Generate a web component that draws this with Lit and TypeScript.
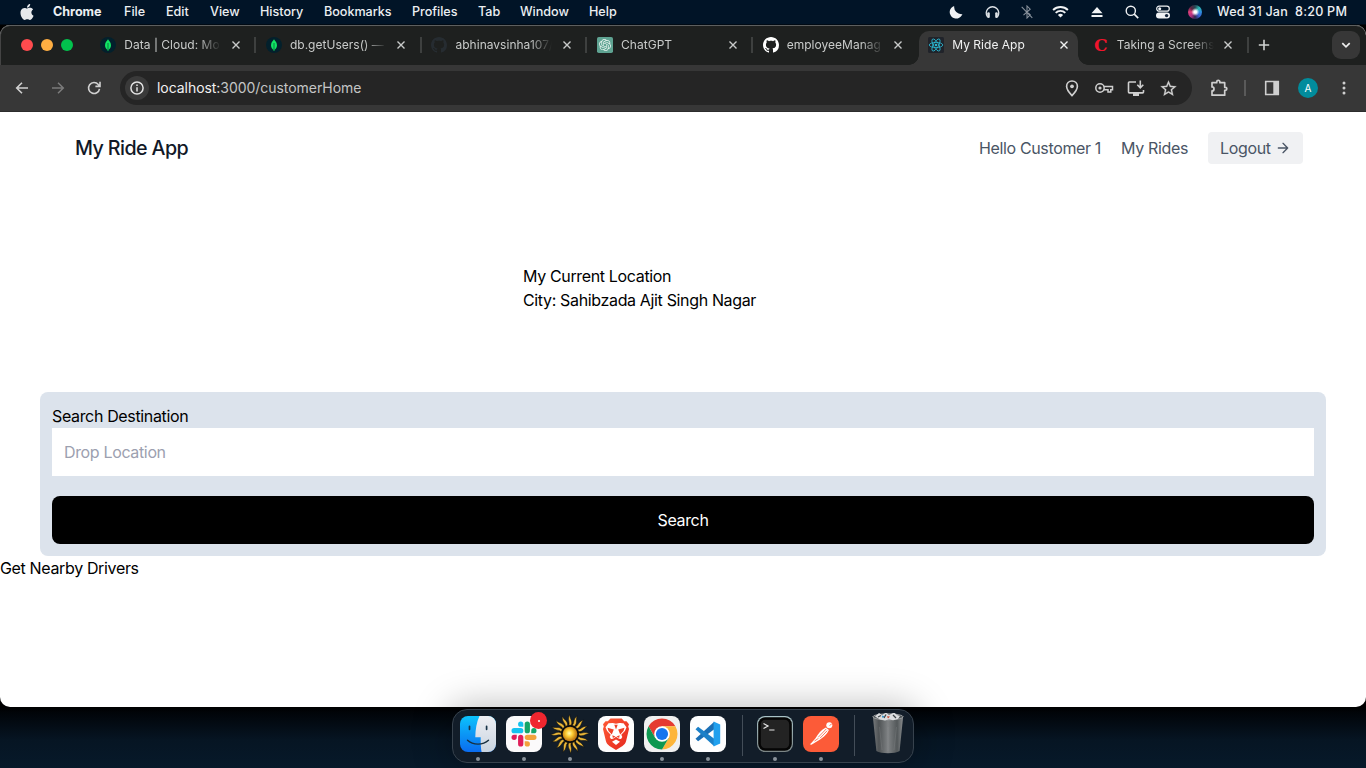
import { LitElement, html, css, svg } from "lit";
import { customElement } from "lit/decorators.js";

const ic = (size: number, viewBox: string, body: unknown) =>
  html`<svg class="ic" width=${size} height=${size} viewBox=${viewBox}>${body}</svg>`;

const APPLE =
  "M12.152 6.896c-.948 0-2.415-1.078-3.96-1.04-2.04.027-3.91 1.183-4.961 3.014-2.117 3.675-.546 9.103 1.519 12.09 1.013 1.454 2.208 3.09 3.792 3.039 1.52-.065 2.09-.987 3.935-.987 1.831 0 2.35.987 3.96.948 1.637-.026 2.676-1.48 3.676-2.948 1.156-1.688 1.636-3.325 1.662-3.415-.039-.013-3.182-1.221-3.22-4.857-.026-3.04 2.48-4.494 2.597-4.559-1.429-2.09-3.623-2.324-4.39-2.376-2-.156-3.675 1.09-4.61 1.09zM15.53 3.83c.843-1.012 1.4-2.427 1.245-3.83-1.207.052-2.662.805-3.532 1.818-.78.896-1.454 2.338-1.273 3.714 1.338.104 2.715-.688 3.559-1.701";
const GITHUB =
  "M8 0C3.58 0 0 3.58 0 8c0 3.54 2.29 6.53 5.47 7.59.4.07.55-.17.55-.38 0-.19-.01-.82-.01-1.49-2.01.37-2.53-.49-2.69-.94-.09-.23-.48-.94-.82-1.13-.28-.15-.68-.52-.01-.53.63-.01 1.08.58 1.23.82.72 1.21 1.87.87 2.33.66.07-.52.28-.87.51-1.07-1.78-.2-3.64-.89-3.64-3.95 0-.87.31-1.59.82-2.15-.08-.2-.36-1.02.08-2.12 0 0 .67-.21 2.2.82.64-.18 1.32-.27 2-.27s1.36.09 2 .27c1.53-1.04 2.2-.82 2.2-.82.44 1.1.16 1.92.08 2.12.51.56.82 1.27.82 2.15 0 3.07-1.87 3.75-3.65 3.95.29.25.54.73.54 1.48 0 1.07-.01 1.93-.01 2.2 0 .21.15.46.55.38A8.01 8.01 0 0 0 16 8c0-4.42-3.58-8-8-8z";
const OPENAI =
  "M22.2819 9.8211a5.9847 5.9847 0 0 0-.5157-4.9108 6.0462 6.0462 0 0 0-6.5098-2.9A6.0651 6.0651 0 0 0 4.9807 4.1818a5.9847 5.9847 0 0 0-3.9977 2.9 6.0462 6.0462 0 0 0 .7427 7.0966 5.98 5.98 0 0 0 .511 4.9107 6.051 6.051 0 0 0 6.5146 2.9001A5.9847 5.9847 0 0 0 13.2599 24a6.0557 6.0557 0 0 0 5.7718-4.2058 5.9894 5.9894 0 0 0 3.9977-2.9001 6.0557 6.0557 0 0 0-.7475-7.0729zm-9.022 12.6081a4.4755 4.4755 0 0 1-2.8764-1.0408l.1419-.0804 4.7783-2.7582a.7948.7948 0 0 0 .3927-.6813v-6.7369l2.02 1.1686a.071.071 0 0 1 .038.052v5.5826a4.504 4.504 0 0 1-4.4945 4.4944zm-9.6607-4.1254a4.4708 4.4708 0 0 1-.5346-3.0137l.142.0852 4.783 2.7582a.7712.7712 0 0 0 .7806 0l5.8428-3.3685v2.3324a.0804.0804 0 0 1-.0332.0615L9.74 19.9502a4.4992 4.4992 0 0 1-6.1408-1.6464zM2.3408 7.8956a4.485 4.485 0 0 1 2.3655-1.9728V11.6a.7664.7664 0 0 0 .3879.6765l5.8144 3.3543-2.0201 1.1685a.0757.0757 0 0 1-.071 0l-4.8303-2.7865A4.504 4.504 0 0 1 2.3408 7.872zm16.5963 3.8558L13.1038 8.364 15.1192 7.2a.0757.0757 0 0 1 .071 0l4.8303 2.7913a4.4944 4.4944 0 0 1-.6765 8.1042v-5.6772a.79.79 0 0 0-.407-.667zm2.0107-3.0231l-.142-.0852-4.7735-2.7818a.7759.7759 0 0 0-.7854 0L9.409 9.2297V6.8974a.0662.0662 0 0 1 .0284-.0615l4.8303-2.7866a4.4992 4.4992 0 0 1 6.6802 4.66zM8.3065 12.863l-2.02-1.1638a.0804.0804 0 0 1-.038-.0567V6.0742a4.4992 4.4992 0 0 1 7.3757-3.4537l-.142.0805L8.704 5.459a.7948.7948 0 0 0-.3927.6813zm1.0976-2.3654l2.602-1.4998 2.6069 1.4998v2.9994l-2.5974 1.4997-2.6067-1.4997Z";

const mongo = ic(16, "0 0 16 16", svg`<circle cx="8" cy="8" r="8" fill="#03202c"/><path d="M8 2.300c.5 1 3 2.900 3 5.900 0 2.600-1.500 4-2.600 4.800L8.200 14h-.4l-.2-1C6.500 12.200 5 10.800 5 8.200c0-3 2.500-4.900 3-5.900z" fill="#10e464"/><path d="M7.500 6h1v8h-1z" fill="#087a43"/>`);
const githubDark = ic(16, "0 0 16 16", svg`<path d=${GITHUB} fill="#262c31"/>`);
const githubLight = ic(16, "0 0 16 16", svg`<path d=${GITHUB} fill="#fff"/>`);
const chatgpt = ic(16, "0 0 16 16", svg`<rect width="16" height="16" rx="1.800" fill="#5fa392"/><path transform="translate(2 2) scale(.5)" d=${OPENAI} fill="#e9f5f1"/>`);
const reactIcon = ic(16, "0 0 16 16", svg`<rect width="16" height="16" rx="1.500" fill="#20232a"/><g fill="none" stroke="#2bb5cf" stroke-width=".85"><ellipse cx="8" cy="8" rx="6.800" ry="2.600"/><ellipse cx="8" cy="8" rx="6.800" ry="2.600" transform="rotate(60 8 8)"/><ellipse cx="8" cy="8" rx="6.800" ry="2.600" transform="rotate(120 8 8)"/></g><circle cx="8" cy="8" r="1.300" fill="#2bb5cf"/>`);
const letterC = html`<span class="letter-c">C</span>`;

const closeX = ic(10, "0 0 10 10", svg`<path d="M1.500 1.500l7 7M8.500 1.500l-7 7" stroke="currentColor" stroke-width="1.400" fill="none"/>`);

const TABS = [
  { icon: mongo, title: "Data | Cloud: Mo" },
  { icon: mongo, title: "db.getUsers() —" },
  { icon: githubDark, title: "abhinavsinha107/" },
  { icon: chatgpt, title: "ChatGPT" },
  { icon: githubLight, title: "employeeManag" },
  { icon: reactIcon, title: "My Ride App", active: true },
  { icon: letterC, title: "Taking a Screens" },
];

const MENUS = ["Chrome", "File", "Edit", "View", "History", "Bookmarks", "Profiles", "Tab", "Window", "Help"];

const STATUS = [
  ic(14, "0 0 14 14", svg`<path d="M5.200 .9A6.500 6.500 0 1 0 13.400 9.100 7.300 7.300 0 0 1 5.200 .9z" fill="#f0f2f4"/>`),
  ic(15, "0 0 15 15", svg`<path d="M2.600 13A6.300 6.300 0 1 1 12.400 13" fill="none" stroke="#dfe3e7" stroke-width="1.300"/><rect x="2.200" y="8.300" width="2.600" height="5.700" rx="1.200" fill="#dfe3e7"/><rect x="10.200" y="8.300" width="2.600" height="5.700" rx="1.200" fill="#dfe3e7"/>`),
  ic(14, "0 0 14 14", svg`<path d="M3.500 10.200l6.700-6L7 1v12l3.200-3.200-2-1.800M1.700 1.800l10.600 11" fill="none" stroke="#8b949e" stroke-width="1.050"/>`),
  ic(17, "0 0 17 17", svg`<g fill="none" stroke="#f0f2f4" stroke-width="1.900"><path d="M1.100 7A10.500 10.500 0 0 1 15.900 7"/><path d="M3.700 9.900a6.800 6.800 0 0 1 9.600 0"/></g><path d="M8.500 14.600L5.900 12a3.700 3.700 0 0 1 5.200 0z" fill="#f0f2f4"/>`),
  ic(12, "0 0 12 12", svg`<path d="M6 1l5.500 6.300H.5zM.5 9h11v2H.5z" fill="#f0f2f4"/>`),
  ic(14, "0 0 14 14", svg`<circle cx="5.800" cy="5.800" r="4.600" fill="none" stroke="#f0f2f4" stroke-width="1.400"/><path d="M9.200 9.200l4 4" stroke="#f0f2f4" stroke-width="1.700"/>`),
  ic(14, "0 0 14 14", svg`<rect x=".7" y="1.200" width="12.600" height="5" rx="2.500" fill="none" stroke="#f0f2f4" stroke-width="1.200"/><circle cx="3.700" cy="3.700" r="1.500" fill="#f0f2f4"/><rect y="7.600" width="14" height="6" rx="3" fill="#f0f2f4"/><circle cx="10.600" cy="10.600" r="1.700" fill="#12243a"/>`),
  html`<span class="siri"></span>`,
];

const OMNI = [
  ic(18, "0 0 24 24", svg`<path d="M12 2.600c-4.200 0-7.200 3.100-7.200 7.200 0 3.700 2.500 7.700 7.200 12.400 4.700-4.700 7.200-8.700 7.200-12.400 0-4.100-3-7.200-7.200-7.200z" fill="none" stroke="currentColor" stroke-width="2.200"/><circle cx="12" cy="9.800" r="2.500" fill="currentColor"/>`),
  ic(20, "0 0 20 20", svg`<g fill="none" stroke="currentColor" stroke-width="1.500"><circle cx="6" cy="10" r="4.200"/><path d="M9.800 8.500H18.500v3.300H16.800v2.200H14v-2.200H9.800"/></g><circle cx="6" cy="10" r="1.600" fill="currentColor"/>`),
  ic(18, "0 0 18 18", svg`<g transform="translate(0 .6)"><g fill="none" stroke="currentColor" stroke-width="1.600"><path d="M9 2.400H2.300a.8.8 0 0 0-.8.8v9.300c0 .5.400.8.800.8h13.400a.8.8 0 0 0 .8-.8V10.500"/><path d="M13.300 1v7M10.300 5.200l3 3 3-3"/></g><path d="M6 13.500h6v2.800H6z" fill="currentColor"/></g>`),
  ic(19, "0 0 24 24", svg`<path d="M22 9.240l-7.190-.62L12 2 9.190 8.630 2 9.240l5.460 4.730L5.820 21 12 17.270 18.180 21l-1.630-7.030L22 9.240zM12 15.400l-3.760 2.270 1-4.280-3.320-2.880 4.380-.38L12 6.100l1.710 4.040 4.380.38-3.320 2.880 1 4.280L12 15.400z" fill="currentColor" stroke="currentColor" stroke-width=".3"/>`),
];

const sunRays = Array.from({ length: 16 }, (_, i) =>
  svg`<path d="M18.500 11.200C20.600 8.400 16.600 5.800 19.800 .4C19.400 4.600 23.200 6.400 21.200 11.200z" transform=${`rotate(${i * 22.5} 20 20)`} fill="#e9b638" stroke="#0c0d0d" stroke-width=".5"/>`);

const finder = svg`<defs><linearGradient id="fb" x1="0" y1="0" x2="0" y2="1"><stop offset="0" stop-color="#0cc2fb"/><stop offset="1" stop-color="#0a6cf0"/></linearGradient><linearGradient id="fw" x1="0" y1="0" x2="0" y2="1"><stop offset="0" stop-color="#eeeff3"/><stop offset="1" stop-color="#c9d4e0"/></linearGradient></defs>
<rect width="36" height="36" rx="8" fill="url(#fb)"/><path d="M19.500 0H28a8 8 0 0 1 8 8v20a8 8 0 0 1-8 8h-6.400c-.7-3.600-1-8-.9-14.800H15.300C15.400 13.500 16.600 5.800 19.500 0z" fill="url(#fw)"/><path d="M9.500 10.300v3M26.600 10.300v3" stroke="#183448" stroke-width="1.700" stroke-linecap="round"/><path d="M7.500 24.200c5.500 5.200 15.500 5.200 21 0" fill="none" stroke="#18303f" stroke-width="1.400" stroke-linecap="round"/>`;
const slack = svg`<rect width="36" height="36" rx="8" fill="#fbfafb"/><g transform="translate(5.500 5.500) scale(1.042)"><path fill="#e01e5a" d="M5.042 15.165a2.528 2.528 0 0 1-2.520 2.523A2.528 2.528 0 0 1 0 15.165a2.527 2.527 0 0 1 2.522-2.520h2.520v2.520zM6.313 15.165a2.527 2.527 0 0 1 2.521-2.520 2.527 2.527 0 0 1 2.521 2.520v6.313A2.528 2.528 0 0 1 8.834 24a2.528 2.528 0 0 1-2.521-2.522v-6.313z"/><path fill="#15c2f0" d="M8.834 5.042a2.528 2.528 0 0 1-2.521-2.520A2.528 2.528 0 0 1 8.834 0a2.528 2.528 0 0 1 2.521 2.522v2.520H8.834zM8.834 6.313a2.528 2.528 0 0 1 2.521 2.521 2.528 2.528 0 0 1-2.521 2.521H2.522A2.528 2.528 0 0 1 0 8.834a2.528 2.528 0 0 1 2.522-2.521h6.312z"/><path fill="#14a568" d="M18.956 8.834a2.528 2.528 0 0 1 2.522-2.521A2.528 2.528 0 0 1 24 8.834a2.528 2.528 0 0 1-2.522 2.521h-2.522V8.834zM17.688 8.834a2.528 2.528 0 0 1-2.523 2.521 2.527 2.527 0 0 1-2.520-2.521V2.522A2.527 2.527 0 0 1 15.165 0a2.528 2.528 0 0 1 2.523 2.522v6.312z"/><path fill="#f2a23c" d="M15.165 18.956a2.528 2.528 0 0 1 2.523 2.522A2.528 2.528 0 0 1 15.165 24a2.527 2.527 0 0 1-2.520-2.522v-2.522h2.520zM15.165 17.688a2.527 2.527 0 0 1-2.520-2.523 2.526 2.526 0 0 1 2.520-2.520h6.313A2.527 2.527 0 0 1 24 15.165a2.528 2.528 0 0 1-2.522 2.523h-6.313z"/></g>`;
const sun = svg`<defs><radialGradient id="sg" cx=".45" cy=".45"><stop offset="0" stop-color="#fff8b0"/><stop offset=".45" stop-color="#fdcf36"/><stop offset="1" stop-color="#c47c12"/></radialGradient></defs><g transform="translate(-2 -2)"><circle cx="20" cy="20" r="11" fill="#0c0d0d"/>${sunRays}<circle cx="20" cy="20" r="8.700" fill="#0c0d0d"/><circle cx="20" cy="20" r="7.300" fill="url(#sg)"/></g>`;
const brave = svg`<defs><linearGradient id="bg" x1="0" y1="0" x2="1" y2="1"><stop offset="0" stop-color="#ff5a35"/><stop offset="1" stop-color="#e4271f"/></linearGradient></defs><rect width="36" height="36" rx="8" fill="#fdfdfd"/><path d="M12.500 2.500h11.200l2.500 2.800 2.300-.1 2.500 3-.8 2.400.8 2.300-2.900 12.100c-.6 2.300-1.500 3.500-3.600 4.900L18 34l-6.500-4.100c-2.100-1.400-3-2.600-3.600-4.900L5 12.900l.8-2.300-.8-2.400 2.500-3 2.300.1z" fill="url(#bg)"/><path d="M18 7.700l3.200-.6c2 .1 4.300.2 4.300.2l3 4-1.600 3.700-3.600 3.800 1 2.200-1.300 2-2-.3L18 20.800l-3 1.900-2 .3-1.300-2 1-2.200L9.100 15l-1.600-3.700 3-4 4.300-.2z" fill="#fff"/><path d="M9.500 11.800l6.300 1.700-.7 1.800-1.300 3.200-3.300-3.600zM26.500 11.800l-6.300 1.700.7 1.800 1.300 3.200 3.300-3.600zM14.300 19.200l3.200 1.300-2.600 1.500zM21.700 19.200l-3.200 1.300 2.600 1.500zM16.300 8.800h3.400L18 13.500z" fill="#ef4128"/><path d="M18 23.500l4 2.300-4 3.300-4-3.300z" fill="#fff"/>`;
const chrome = svg`<rect width="36" height="36" rx="8" fill="#f0f0f0"/><g><path d="M4.580 10.250A15.500 15.500 0 0 1 31.420 10.250H18L11.300 21.900z" fill="#e53a31"/><path d="M31.420 10.250A15.500 15.500 0 0 1 18 33.500L24.710 21.880L18 10.250z" fill="#fdb53a"/><path d="M4.580 10.250A15.500 15.500 0 0 0 18 33.500L24.710 21.880H11.290z" fill="#0d9850"/><circle cx="18" cy="18" r="7.800" fill="#fff"/><circle cx="18" cy="18" r="6.100" fill="#1576ee"/></g>`;
const vscode = svg`<rect width="36" height="36" rx="8" fill="#fefefe"/><path d="M24.200 5.700L5.500 22.800l2.600 2.500L24.600 13z" fill="#1a6fb5"/><path d="M24.200 30.300L5.500 13.300l2.600-2.500L24.600 23z" fill="#1b80c8"/><path d="M23.600 5.600l6.600 3v18.800l-6.600 3z" fill="#20a0ee"/>`;
const terminal = svg`<defs><linearGradient id="tg" x1="0" y1="0" x2="0" y2="1"><stop offset="0" stop-color="#a9c3c7"/><stop offset="1" stop-color="#7b8585"/></linearGradient></defs><rect width="36" height="36" rx="8" fill="url(#tg)"/><rect x="1.200" y="1.200" width="33.600" height="33.600" rx="7" fill="#050505"/><rect x="3.800" y="3.800" width="28.400" height="28.400" rx="4.500" fill="#232323"/><path d="M6.500 7.400l4.500 2.500-4.500 2.500M12.200 14h5.300" fill="none" stroke="#e8e8e8" stroke-width="1.200"/>`;
const postman = svg`<rect width="36" height="36" rx="8" fill="#fc5b38"/><circle cx="26.300" cy="9.300" r="3" fill="#fff"/><path d="M22.900 11.500l3 2.500c-1.500 3.500-5.200 7.500-8.800 9.400L8.500 28.700l-1.700-.4 1.500-1.300 4.200-4.800c2.700-4.500 5.600-8.500 10.400-10.700z" fill="#fff"/><path d="M15.300 21.200l8-8.300M17 22.200l7.200-7.500M11.500 25l4-2.700M26.500 9.500l2.300-1.600" stroke="#fc5b38" stroke-width=".8"/>`;
const trash = svg`<defs><linearGradient id="tr" x1="0" y1="0" x2="1" y2="0"><stop offset="0" stop-color="#777a7c"/><stop offset=".2" stop-color="#4f5355"/><stop offset=".5" stop-color="#7f8284"/><stop offset=".8" stop-color="#53585a"/><stop offset="1" stop-color="#8b8e90"/></linearGradient></defs><path d="M1.800 3L5.400 38C10 41 24 41 28.600 38L32.200 3z" fill="url(#tr)"/><ellipse cx="17" cy="3.800" rx="15.200" ry="3" fill="#4f5558" stroke="#a9acae" stroke-width=".8"/><path d="M4 3.500L8 0l3 2 4-2.500L18 2l5-2.500 3 2.500 3 1-2 3-5 1.300-4-1-4 1.300-5-1z" fill="#dcdee0"/><path d="M7 4l3-1.500M13 5l2-3.500M22 2l3 3" stroke="#3d4448" stroke-width="1.300"/><path d="M11 2.500l2.500 1-2 1.500z" fill="#1f8ac5"/><path d="M16 3.200l3 .3-2 2z" fill="#c9442e"/><path d="M8.500 14L11 37M17 14v24M25.500 14L23 37" stroke="#a0a3a5" stroke-width=".5" opacity=".4"/>`;

const app = (body: unknown, running = true, extra: unknown = "") => html`
  <div class="app">
    <div class="tile"><svg class="ic tile-svg" width="36" height="36" viewBox="0 0 36 36">${body}</svg>${extra}</div>
    <span class=${running ? "dot" : "dot off"}></span>
  </div>`;

@customElement("app-root")
export class AppRoot extends LitElement {
  static styles = css`
    :host { display: block; width: 1366px; height: 768px; overflow: hidden; font-family: Inter, "Liberation Sans", sans-serif; }
    * { box-sizing: border-box; }
    .ic { display: block; flex: none; }
    .desktop { position: relative; display: flex; flex-direction: column; height: 768px; background: linear-gradient(#011427 0 24px, #000 25px, #000 707px, #010408 712px, #061523 740px, #07192a 768px); }
    .menubar { height: 24px; flex: none; display: flex; justify-content: space-between; align-items: center; padding: 0 18px 1px 19px; color: #eceff2; font-size: 12.6px; font-weight: 500; letter-spacing: -.02px; background: #011427; }
    .menus { display: grid; grid-template-columns: 34px 71px 42px 44px 50px 64px 88px 66px 42px 69px 60px; align-items: center; white-space: nowrap; }
    .menus span:first-of-type { font-weight: 700; }
    .status { display: flex; align-items: center; }
    .status-icons { display: grid; grid-template-columns: 38px 35px 33px 35px 37px 33px 30px 33px; justify-items: center; align-items: center; }
    .clock { white-space: pre; width: 131px; margin-left: 6px; letter-spacing: .2px; }
    .siri { width: 14px; height: 14px; border-radius: 50%; background: radial-gradient(circle at 52% 50%, #fff 0 12%, #fff0 40%), conic-gradient(#24434f, #2bb5b0, #2e8fe0, #3a5fd0, #31284f, #b03080, #e0407a, #5b2440, #24434f); }

    .window { height: 682px; margin-top: 1px; flex: none; display: flex; flex-direction: column; border-radius: 10px; overflow: hidden; background: #fff; position: relative; }
    .tabstrip { height: 40px; flex: none; display: flex; align-items: center; background: #1e201f; box-shadow: inset 0 1px #5d5f5f, inset 1px 0 #444; border-radius: 10px 10px 0 0; }
    .lights { width: 90px; display: flex; gap: 8px; padding-left: 21px; }
    .light { width: 12px; height: 12px; border-radius: 50%; }
    .red { background: #ff4b4e; } .amber { background: #ffae42; } .green { background: #02c34d; }
    .tab { width: 165.600px; height: 40px; display: flex; align-items: center; padding: 0 13.600px 0 10.300px; color: #c9cbca; position: relative; }
    .tab-title { width: 100px; margin-left: 8px; margin-right: -4px; padding-bottom: 1px; white-space: nowrap; font-size: 12px; letter-spacing: .02px; font-weight: 400; -webkit-mask-image: linear-gradient(90deg, #000 74px, transparent 97px); mask-image: linear-gradient(90deg, #000 74px, transparent 97px); }
    .tab .close { margin-left: 10.500px; width: 10px; }
    .sep { width: 2px; height: 16px; background: #3e403f; margin-left: auto; margin-right: -14px; }
    .tab.active { color: #f0f1f1; width: 164.600px; }
    .tab.active::before { content: ""; position: absolute; left: 1.500px; right: 4.200px; top: 6px; bottom: 0; background: #373737; border-radius: 10px 10px 0 0; }
    .tab.active::after { content: ""; position: absolute; left: -8.500px; right: -5.800px; bottom: 0; height: 10px; background: radial-gradient(circle at 0 0, #0000 9.500px, #373737 10px) left / 10px 10px no-repeat, radial-gradient(circle at 100% 0, #0000 9.500px, #373737 10px) right / 10px 10px no-repeat; }
    .tab.active > * { position: relative; z-index: 1; }
    .letter-c { width: 16px; text-align: center; font: 700 17px/16px "DejaVu Serif", serif; color: #f0142c; }
    .plus { margin-left: 9.500px; color: #d0d2d1; }
    .more { width: 28px; height: 28px; border-radius: 9px; background: #373737; margin-left: auto; margin-right: 6px; display: grid; place-items: center; color: #eee; }

    .toolbar { height: 46px; flex: none; display: flex; align-items: center; background: #373737; color: #cfcfcf; padding-left: 14px; }
    .nav-icons { display: grid; grid-template-columns: 36px 36px 34px; }
    .dim { color: #7b7b7b; }
    .omnibox { width: 1072px; height: 34px; border-radius: 17px; background: #252525; display: flex; align-items: center; padding: 0 15px 0 5px; }
    .info { width: 24px; height: 24px; border-radius: 50%; background: #3a3a3a; display: grid; place-items: center; color: #e3e3e3; }
    .url { margin-left: 8px; padding-bottom: 1px; font-size: 14px; color: #c4c5c5; letter-spacing: -.05px; }
    .url b { font-weight: 400; color: #f2f2f2; }
    .omni-icons { margin-left: auto; display: grid; grid-template-columns: repeat(4, 32px); justify-items: center; align-items: center; margin-right: -7px; }
    .right { flex: 1; display: grid; grid-template-columns: 37px 16px 37px 36px 36px; margin-left: 8px; justify-items: center; align-items: center; }
    .vsep { width: 2px; height: 16px; background: #5a5a5a; }
    .avatar { width: 20px; height: 20px; border-radius: 50%; background: #018c9c; color: #fff; font-size: 10px; line-height: 20px; text-align: center; }

    .page { flex: 1; border-top: 1px solid #2c2c2c; color: #000; font-size: 16px; line-height: 24px; display: flex; flex-direction: column; letter-spacing: -.35px; }
    .nav { height: 72px; display: flex; align-items: center; padding: 0 63px 0 75px; color: #4a5565; }
    .brand { font-size: 19.700px; font-weight: 500; color: #111827; letter-spacing: -.6px; }
    .links { margin-left: auto; display: flex; align-items: center; gap: 20px; }
    .logout { width: 95px; height: 32px; border-radius: 4px; background: #f0f1f3; display: flex; align-items: center; padding-left: 12px; gap: 4px; }
    .location { margin: 80px 0 80px 523px; }
    .card { margin: 0 40px; background: #dce3ec; border-radius: 8px; padding: 12px; display: flex; flex-direction: column; }
    .field { height: 48px; background: #fff; padding: 12px; color: #9ca0af; margin-bottom: 20px; }
    .search { height: 48px; border-radius: 8px; background: #000; color: #fff; text-align: center; line-height: 48px; }

    .dock { position: absolute; left: 452px; top: 709px; width: 462px; height: 54px; border-radius: 15px; background: #121d29; border: 1px solid #37424d; box-shadow: 0 0 36px 4px #00000042; padding: 5px 7px 0 7px; display: flex; }
    .app { width: 46px; display: flex; flex-direction: column; flex: none; }
    .tile { width: 36px; height: 36px; margin-top: 1px; position: relative; }
    .tile-svg { overflow: visible; }
    .badge { position: absolute; right: -5px; top: -4px; width: 17px; height: 17px; border-radius: 50%; background: #f0262f; display: grid; place-items: center; }
    .badge i { width: 2px; height: 2px; border-radius: 50%; background: #fff; }
    .dot { width: 4px; height: 4px; border-radius: 50%; background: #8b939b; margin: 5px 0 0 16px; }
    .off { visibility: hidden; }
    .dock-sep { width: 1px; height: 41px; flex: none; background: #434d58; margin: 0 14px 0 6px; }
    .dock-sep.last { margin-left: 5px; margin-right: 16px; }
    .trash { margin-top: -2px; }
  `;

  render() {
    return html`
      <div class="desktop">
        <header class="menubar">
          <nav class="menus">
            ${ic(16, "0 0 24 24", svg`<path d=${APPLE} fill="#e6e9ec"/>`)}
            ${MENUS.map((m) => html`<span>${m}</span>`)}
          </nav>
          <div class="status">
            <div class="status-icons">${STATUS}</div>
            <span class="clock">Wed 31 Jan  8:20 PM</span>
          </div>
        </header>

        <main class="window">
          <div class="tabstrip">
            <div class="lights"><span class="light red"></span><span class="light amber"></span><span class="light green"></span></div>
            ${TABS.map((t, i) => html`
              <div class=${t.active ? "tab active" : "tab"}>
                ${t.icon}<span class="tab-title">${t.title}</span><span class="close">${closeX}</span>
                ${i === 4 || i === 5 ? "" : html`<span class="sep"></span>`}
              </div>`)}
            <span class="plus">${ic(12, "0 0 12 12", svg`<path d="M6 .8v10.400M.8 6h10.400" stroke="currentColor" stroke-width="1.600"/>`)}</span>
            <span class="more">${ic(10, "0 0 10 10", svg`<path d="M1.300 3.200L5 6.900l3.700-3.700" fill="none" stroke="currentColor" stroke-width="1.700"/>`)}</span>
          </div>

          <div class="toolbar">
            <div class="nav-icons">
              ${ic(16, "0 0 16 16", svg`<path d="M14 8H3M8 2.700L2.700 8 8 13.300" fill="none" stroke="currentColor" stroke-width="1.600"/>`)}
              <span class="dim">${ic(16, "0 0 16 16", svg`<path d="M2 8h11M8 2.700L13.300 8 8 13.300" fill="none" stroke="currentColor" stroke-width="1.500"/>`)}</span>
              ${ic(16, "0 0 16 16", svg`<path d="M13.500 8.800A5.500 5.500 0 1 1 12.300 4.500L14 6.200M14 1.800v4.600H9.400" fill="none" stroke="currentColor" stroke-width="1.600"/>`)}
            </div>
            <div class="omnibox">
              <span class="info">${ic(14, "0 0 14 14", svg`<circle cx="7" cy="7" r="6.100" fill="none" stroke="currentColor" stroke-width="1.500"/><path d="M7 6.200v4.200M7 3.600v1.500" stroke="currentColor" stroke-width="1.500"/>`)}</span>
              <span class="url"><b>localhost:</b>3000/customerHome</span>
              <div class="omni-icons">${OMNI}</div>
            </div>
            <div class="right">
              ${ic(18, "0 0 18 18", svg`<path d="M2 3.700h4.700V2.900a1.500 1.500 0 0 1 3.200 0v.8h4.800v4.600h.6a1.500 1.500 0 0 1 0 3.100h-.6v4.800H2v-4.300a2 2 0 0 0 0-4z" fill="none" stroke="currentColor" stroke-width="1.700" stroke-linejoin="round"/>`)}
              <span class="vsep"></span>
              ${ic(16, "0 0 16 16", svg`<path d="M1.700 1.500h12.600v13H1.700z" fill="none" stroke="currentColor" stroke-width="1.600"/><path d="M9.300 1.500h5v13h-5z" fill="currentColor"/>`)}
              <span class="avatar">A</span>
              ${ic(16, "0 0 16 16", svg`<g fill="currentColor"><circle cx="8" cy="3" r="1.500"/><circle cx="8" cy="8" r="1.500"/><circle cx="8" cy="13" r="1.500"/></g>`)}
            </div>
          </div>

          <section class="page">
            <div class="nav">
              <span class="brand">My Ride App</span>
              <div class="links">
                <span>Hello Customer 1</span>
                <span>My Rides</span>
                <span class="logout">Logout ${ic(16, "0 0 24 24", svg`<path d="M5 12h14M12 5l7 7-7 7" fill="none" stroke="currentColor" stroke-width="2" stroke-linecap="round" stroke-linejoin="round"/>`)}</span>
              </div>
            </div>
            <div class="location"><div>My Current Location</div><div>City: Sahibzada Ajit Singh Nagar</div></div>
            <div class="card">
              <label>Search Destination</label>
              <div class="field">Drop Location</div>
              <div class="search">Search</div>
            </div>
            <div>Get Nearby Drivers</div>
          </section>
        </main>

        <footer class="dock">
          ${app(finder)}
          ${app(slack, true, html`<span class="badge"><i></i></span>`)}
          ${app(sun)}
          ${app(brave, false)}
          ${app(chrome)}
          ${app(vscode)}
          <span class="dock-sep"></span>
          ${app(terminal)}
          ${app(postman)}
          <span class="dock-sep last"></span>
          <svg class="ic trash" width="34" height="42" viewBox="0 0 34 42">${trash}</svg>
        </footer>
      </div>`;
  }
}
